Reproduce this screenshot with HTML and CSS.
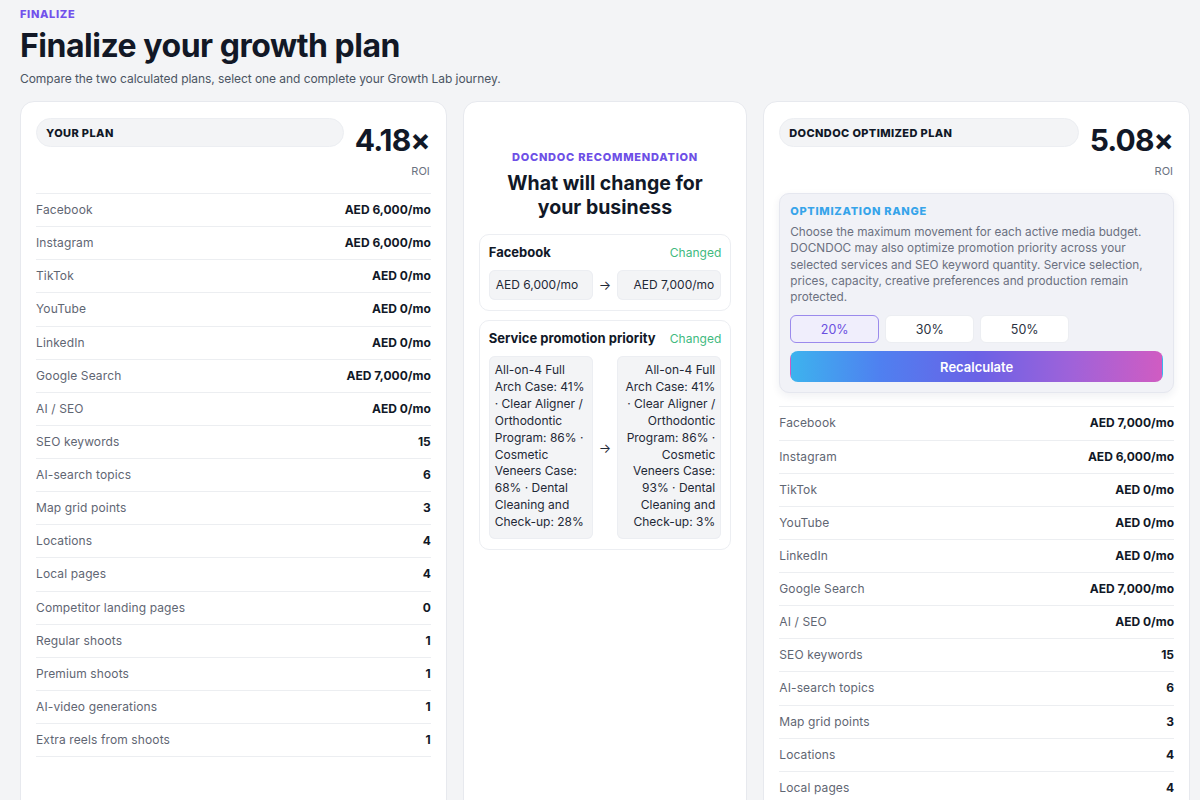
FILE: index.html
```html
<!DOCTYPE html>
<html lang="en">
<head>
<meta charset="utf-8">
<title>Finalize your growth plan</title>
<link rel="stylesheet" href="styles.css">
</head>
<body>
<div class="page">
  <div class="eyebrow">FINALIZE</div>
  <h1 class="title">Finalize your growth plan</h1>
  <p class="subtitle">Compare the two calculated plans, select one and complete your Growth Lab journey.</p>

  <div class="grid">
    <section class="card">
      <div class="plan-head">
        <div class="pill">YOUR PLAN</div>
        <div class="roi">
          <div class="roi-val">4.18×</div>
          <div class="roi-lbl">ROI</div>
        </div>
      </div>
      <div class="rows">
        <div class="row"><span class="lbl">Facebook</span><span class="val">AED 6,000/mo</span></div>
        <div class="row"><span class="lbl">Instagram</span><span class="val">AED 6,000/mo</span></div>
        <div class="row"><span class="lbl">TikTok</span><span class="val">AED 0/mo</span></div>
        <div class="row"><span class="lbl">YouTube</span><span class="val">AED 0/mo</span></div>
        <div class="row"><span class="lbl">LinkedIn</span><span class="val">AED 0/mo</span></div>
        <div class="row"><span class="lbl">Google Search</span><span class="val">AED 7,000/mo</span></div>
        <div class="row"><span class="lbl">AI / SEO</span><span class="val">AED 0/mo</span></div>
        <div class="row"><span class="lbl">SEO keywords</span><span class="val">15</span></div>
        <div class="row"><span class="lbl">AI-search topics</span><span class="val">6</span></div>
        <div class="row"><span class="lbl">Map grid points</span><span class="val">3</span></div>
        <div class="row"><span class="lbl">Locations</span><span class="val">4</span></div>
        <div class="row"><span class="lbl">Local pages</span><span class="val">4</span></div>
        <div class="row"><span class="lbl">Competitor landing pages</span><span class="val">0</span></div>
        <div class="row"><span class="lbl">Regular shoots</span><span class="val">1</span></div>
        <div class="row"><span class="lbl">Premium shoots</span><span class="val">1</span></div>
        <div class="row"><span class="lbl">AI-video generations</span><span class="val">1</span></div>
        <div class="row"><span class="lbl">Extra reels from shoots</span><span class="val">1</span></div>
      </div>
    </section>

    <section class="card card-mid">
      <div class="rec-eyebrow">DOCNDOC RECOMMENDATION</div>
      <h2 class="rec-title">What will change for your business</h2>

      <div class="change">
        <div class="change-head">
          <span class="change-name">Facebook</span>
          <span class="changed">Changed</span>
        </div>
        <div class="compare">
          <div class="vbox">AED 6,000/mo</div>
          <span class="arrow">→</span>
          <div class="vbox vbox-right">AED 7,000/mo</div>
        </div>
      </div>

      <div class="change">
        <div class="change-head">
          <span class="change-name">Service promotion priority</span>
          <span class="changed">Changed</span>
        </div>
        <div class="compare">
          <div class="vbox vbox-tall">All-on-4 Full Arch Case: 41% · Clear Aligner / Orthodontic Program: 86% · Cosmetic Veneers Case: 68% · Dental Cleaning and Check-up: 28%</div>
          <span class="arrow">→</span>
          <div class="vbox vbox-tall vbox-right">All-on-4 Full Arch Case: 41% · Clear Aligner / Orthodontic Program: 86% · Cosmetic Veneers Case: 93% · Dental Cleaning and Check-up: 3%</div>
        </div>
      </div>
    </section>

    <section class="card">
      <div class="plan-head">
        <div class="pill">DOCNDOC OPTIMIZED PLAN</div>
        <div class="roi">
          <div class="roi-val">5.08×</div>
          <div class="roi-lbl">ROI</div>
        </div>
      </div>

      <div class="opt">
        <div class="opt-title">OPTIMIZATION RANGE</div>
        <p class="opt-desc">Choose the maximum movement for each active media budget. DOCNDOC may also optimize promotion priority across your selected services and SEO keyword quantity. Service selection, prices, capacity, creative preferences and production remain protected.</p>
        <div class="opt-choices">
          <button class="choice choice-active">20%</button>
          <button class="choice">30%</button>
          <button class="choice">50%</button>
        </div>
        <button class="recalc">Recalculate</button>
      </div>

      <div class="rows">
        <div class="row"><span class="lbl">Facebook</span><span class="val">AED 7,000/mo</span></div>
        <div class="row"><span class="lbl">Instagram</span><span class="val">AED 6,000/mo</span></div>
        <div class="row"><span class="lbl">TikTok</span><span class="val">AED 0/mo</span></div>
        <div class="row"><span class="lbl">YouTube</span><span class="val">AED 0/mo</span></div>
        <div class="row"><span class="lbl">LinkedIn</span><span class="val">AED 0/mo</span></div>
        <div class="row"><span class="lbl">Google Search</span><span class="val">AED 7,000/mo</span></div>
        <div class="row"><span class="lbl">AI / SEO</span><span class="val">AED 0/mo</span></div>
        <div class="row"><span class="lbl">SEO keywords</span><span class="val">15</span></div>
        <div class="row"><span class="lbl">AI-search topics</span><span class="val">6</span></div>
        <div class="row"><span class="lbl">Map grid points</span><span class="val">3</span></div>
        <div class="row"><span class="lbl">Locations</span><span class="val">4</span></div>
        <div class="row"><span class="lbl">Local pages</span><span class="val">4</span></div>
        <div class="row"><span class="lbl">Competitor landing pages</span><span class="val">0</span></div>
        <div class="row"><span class="lbl">Regular shoots</span><span class="val">1</span></div>
        <div class="row"><span class="lbl">Premium shoots</span><span class="val">1</span></div>
        <div class="row"><span class="lbl">AI-video generations</span><span class="val">1</span></div>
        <div class="row"><span class="lbl">Extra reels from shoots</span><span class="val">1</span></div>
      </div>
    </section>
  </div>
</div>
</body>
</html>
```

FILE: styles.css
```css
* { box-sizing: border-box; }

html, body {
  margin: 0;
  padding: 0;
  background: #f3f4f6;
}

body {
  font-family: Inter, "Noto Sans", "Liberation Sans", sans-serif;
  color: #111827;
}

.page {
  padding: 7px 10px 0 20px;
}

.eyebrow {
  font-size: 11px;
  line-height: 14px;
  font-weight: 800;
  color: #7251ec;
  letter-spacing: 0.06em;
}

.title {
  margin: 6px 0 0;
  font-size: 32px;
  line-height: 38px;
  font-weight: 700;
  letter-spacing: -0.015em;
  color: #121826;
}

.subtitle {
  margin: 6px 0 0;
  font-size: 12px;
  line-height: 16px;
  letter-spacing: -0.005em;
  color: #4b5563;
}

.grid {
  margin-top: 14px;
  display: grid;
  grid-template-columns: 1.5fr 1fr 1.5fr;
  gap: 16px;
  align-items: stretch;
}

.card {
  background: #ffffff;
  border: 1px solid #e7e9ee;
  border-radius: 14px;
  padding: 16px 15px 40px;
  min-height: 720px;
}

.plan-head {
  display: flex;
  align-items: flex-start;
  gap: 11px;
  padding-bottom: 14px;
}

.pill {
  flex: 1;
  height: 29px;
  display: flex;
  align-items: center;
  padding: 0 9px;
  background: #f3f4f6;
  border: 1px solid #eceef2;
  border-radius: 999px;
  font-size: 11px;
  font-weight: 800;
  letter-spacing: 0.035em;
  color: #111827;
}

.roi {
  text-align: right;
  padding-right: 1px;
}

.roi-val {
  margin-top: 2px;
  font-size: 30px;
  line-height: 40px;
  font-weight: 700;
  letter-spacing: -0.03em;
  color: #111827;
}

.roi-lbl {
  margin-top: 3px;
  font-size: 11px;
  line-height: 16px;
  color: #6b7280;
}

.rows {
  border-bottom: 1px solid #eceef1;
}

.row {
  display: flex;
  justify-content: space-between;
  align-items: center;
  border-top: 1px solid #eceef1;
  padding: 8px 0;
  line-height: 16.12px;
  font-size: 12px;
}

.lbl {
  color: #5f6673;
  letter-spacing: 0.01em;
}

.val {
  font-weight: 700;
  color: #111827;
}

/* middle card */
.card-mid {
  padding-top: 48px;
}

.rec-eyebrow {
  text-align: center;
  font-size: 11px;
  line-height: 14px;
  font-weight: 800;
  letter-spacing: 0.07em;
  color: #6d4fe6;
}

.rec-title {
  margin: 7px 16px 0;
  text-align: center;
  font-size: 19.5px;
  line-height: 24px;
  font-weight: 700;
  color: #111827;
}

.change {
  margin-top: 9px;
  border: 1px solid #eceef2;
  border-radius: 10px;
  padding: 9px 9px 10px;
}

.rec-title + .change {
  margin-top: 15px;
}

.change-head {
  display: flex;
  justify-content: space-between;
  align-items: center;
  gap: 8px;
  line-height: 17px;
}

.change-name {
  font-size: 13px;
  font-weight: 700;
  color: #111827;
}

.changed {
  font-size: 12px;
  color: #3fba7f;
}

.compare {
  margin-top: 9px;
  display: grid;
  grid-template-columns: 1fr auto 1fr;
  align-items: center;
  gap: 6px;
}

.vbox {
  background: #f3f4f6;
  border-radius: 6px;
  box-shadow: inset 0 0 0 1px #eceef2;
  padding: 7px 7px;
  font-size: 12px;
  line-height: 16px;
  color: #1f2937;
}

.vbox-right {
  text-align: right;
}

.vbox-tall {
  padding: 6px 4px 8px 6px;
  line-height: 16.9px;
  align-self: stretch;
}

.vbox-tall.vbox-right {
  padding: 6px 6px 8px 4px;
}

.arrow {
  font-size: 13px;
  color: #1f2937;
}

/* optimization box */
.opt {
  background: #f1f2f7;
  border: 1px solid #e5e7ef;
  border-radius: 10px;
  padding: 10px 10px 10px;
  box-shadow: 0 3px 8px rgba(30, 40, 80, 0.07);
  margin-bottom: 13px;
}

.opt-title {
  font-size: 11px;
  line-height: 14px;
  font-weight: 800;
  letter-spacing: 0.065em;
  color: #36a4ea;
}

.opt-desc {
  margin: 6px 0 0;
  font-size: 11.75px;
  line-height: 16.3px;
  color: #6b7080;
}

.opt-choices {
  margin-top: 10px;
  display: flex;
  gap: 6px;
}

.choice {
  width: 89px;
  height: 28px;
  background: #ffffff;
  border: 1px solid #eceef2;
  border-radius: 6px;
  font-family: inherit;
  font-size: 12.5px;
  color: #2b3140;
  padding: 0;
}

.choice-active {
  background: #f0eefc;
  border-color: #9b8aec;
  color: #6a4fe0;
}

.recalc {
  margin-top: 8px;
  display: block;
  width: 100%;
  height: 31px;
  border: 1px solid transparent;
  border-radius: 8px;
  background: linear-gradient(90deg, #3db3ee 0%, #4f80f0 24%, #6a62e6 50%, #a062d9 76%, #d05cc2 100%);
  background-origin: padding-box;
  font-family: inherit;
  font-size: 13px;
  font-weight: 600;
  color: #ffffff;
  padding: 0;
}
```
